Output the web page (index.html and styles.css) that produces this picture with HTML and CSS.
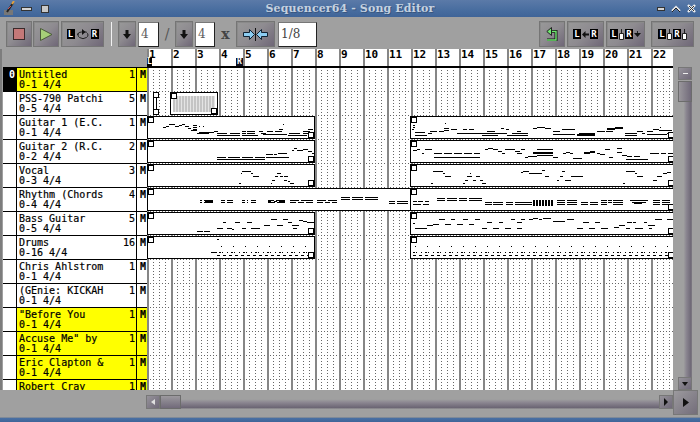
FILE: index.html
```html
<!DOCTYPE html>
<html lang="en">
<head>
<meta charset="utf-8">
<title>Sequencer64 - Song Editor</title>
<link rel="stylesheet" href="styles.css">
</head>
<body>
<div class="window">
  <header class="titlebar">
    <div class="tb-group">
      <svg class="tb-icon" width="12" height="15" viewBox="0 0 12 15"><path d="M0 9h9v5H0z" fill="#777"/><path d="M3 11L9 2" stroke="#222" stroke-width="2"/><path d="M8 3L10 0" stroke="#e0a040" stroke-width="2"/><path d="M4 8l3-3" stroke="#d05050"/></svg>
      <span class="tb-min"></span>
      <span class="tb-max"></span>
    </div>
    <div class="tb-title">Sequencer64 - Song Editor</div>
    <div class="tb-group tb-right">
      <span class="tb-min small"></span>
      <svg width="10" height="8" viewBox="0 0 10 8"><path d="M1 6l4-4 4 4" fill="none" stroke="#e8e8e8" stroke-width="2"/><path d="M1 7l4-4 4 4" fill="none" stroke="#222" stroke-width="1"/></svg>
      <svg width="9" height="9" viewBox="0 0 9 9"><path d="M1 1l7 7M8 1L1 8" stroke="#eee" stroke-width="2.4"/><path d="M2 2l5 5M7 2L2 7" stroke="#333" stroke-width="1"/></svg>
    </div>
  </header>

  <nav class="toolbar">
    <button class="btn w26"><span class="stop"></span></button>
    <button class="btn w26"><svg width="13" height="13" viewBox="0 0 13 13"><path d="M.5 .5L12 6.500.5 12.500z" fill="#a6cf78" stroke="#4a5a3a"/></svg></button>
    <button class="btn w43"><span class="mk">L</span><svg width="14" height="11" viewBox="0 0 14 11"><path d="M3.500 3.500a5 3.500 0 1 0 7 0" fill="none" stroke="#222"/><path d="M1.500 6a5 3 0 0 1 4-3h5" fill="none" stroke="#222"/><path d="M6 0v6l3.500-3z" fill="#111"/></svg><span class="mk">R</span></button>
    <span class="sep"></span>
    <button class="btn w18"><svg width="8" height="9" viewBox="0 0 8 9"><path d="M2.500 0h3v4H8L4 9 0 4h2.500z" fill="#111"/></svg></button>
    <span class="entry e21">4</span>
    <span class="glyph slash">/</span>
    <button class="btn w18"><svg width="8" height="9" viewBox="0 0 8 9"><path d="M2.500 0h3v4H8L4 9 0 4h2.500z" fill="#111"/></svg></button>
    <span class="entry e20">4</span>
    <span class="glyph times">x</span>
    <button class="btn w39"><svg width="25" height="13" viewBox="0 0 25 13"><path d="M.5 4.500h6v-3l5 5-5 5v-3h-6z" fill="#8ccdf2" stroke="#123"/><path d="M12.500 0v13" stroke="#111"/><path d="M24.500 4.500h-6v-3l-5 5 5 5v-3h6z" fill="#8ccdf2" stroke="#123"/></svg></button>
    <span class="entry e39">1/8</span>
    <span class="spacer"></span>
    <button class="btn w26"><svg width="12" height="14" viewBox="0 0 12 14"><path d="M1 13h9V4.500H4" fill="none" stroke="#111" stroke-width="3"/><path d="M1 13h9V4.500H4" fill="none" stroke="#6fe86f" stroke-width="1.400"/><path d="M5.500 .5L.8 4.500l4.700 4z" fill="#6fe86f" stroke="#222"/></svg></button>
    <button class="btn w37"><span class="mk">L</span><svg width="7" height="7" viewBox="0 0 7 7"><path d="M0 3.500L3.500 0v2.500H7v2H3.500V7z" fill="#111"/></svg><span class="mk">R</span></button>
    <button class="btn w39"><span class="mk">L</span><svg width="5" height="11" viewBox="0 0 5 11"><path d="M.5 4.500h4v6h-4z" fill="#fff" stroke="#222"/><path d="M2.500 0v4" stroke="#222"/></svg><span class="mk">R</span><svg width="7" height="11" viewBox="0 0 7 11"><path d="M3.500 2v3" stroke="#222"/><path d="M0 4h7L3.500 8z" fill="#111"/></svg></button>
    <button class="btn w43"><span class="mk">L</span><svg width="5" height="11" viewBox="0 0 5 11"><path d="M.5 4.500h4v6h-4z" fill="#fff" stroke="#222"/><path d="M2.500 0v4" stroke="#222"/></svg><span class="mk">R</span><svg width="5" height="11" viewBox="0 0 5 11"><path d="M.5 4.500h4v6h-4z" fill="#fff" stroke="#222"/><path d="M2.500 0v4" stroke="#222"/></svg></button>
  </nav>

  <main class="song">
    <section class="tracks">
      <div class="track active"><span class="num">0</span><div class="name"><div class="line"><span>Untitled</span><span>1</span></div><div>0-1 4/4</div></div><span class="mute">M</span></div>
      <div class="track"><span class="num"></span><div class="name"><div class="line"><span>PSS-790 Patchi</span><span>5</span></div><div>0-5 4/4</div></div><span class="mute">M</span></div>
      <div class="track"><span class="num"></span><div class="name"><div class="line"><span>Guitar 1 (E.C.</span><span>1</span></div><div>0-1 4/4</div></div><span class="mute">M</span></div>
      <div class="track"><span class="num"></span><div class="name"><div class="line"><span>Guitar 2 (R.C.</span><span>2</span></div><div>0-2 4/4</div></div><span class="mute">M</span></div>
      <div class="track"><span class="num"></span><div class="name"><div class="line"><span>Vocal</span><span>3</span></div><div>0-3 4/4</div></div><span class="mute">M</span></div>
      <div class="track"><span class="num"></span><div class="name"><div class="line"><span>Rhythm (Chords</span><span>4</span></div><div>0-4 4/4</div></div><span class="mute">M</span></div>
      <div class="track"><span class="num"></span><div class="name"><div class="line"><span>Bass Guitar</span><span>5</span></div><div>0-5 4/4</div></div><span class="mute">M</span></div>
      <div class="track"><span class="num"></span><div class="name"><div class="line"><span>Drums</span><span>16</span></div><div>0-16 4/4</div></div><span class="mute">M</span></div>
      <div class="track"><span class="num"></span><div class="name"><div class="line"><span>Chris Ahlstrom</span><span>1</span></div><div>0-1 4/4</div></div><span class="mute">M</span></div>
      <div class="track"><span class="num"></span><div class="name"><div class="line"><span>(GEnie: KICKAH</span><span>1</span></div><div>0-1 4/4</div></div><span class="mute">M</span></div>
      <div class="track active"><span class="num"></span><div class="name"><div class="line"><span>"Before You</span><span>1</span></div><div>0-1 4/4</div></div><span class="mute">M</span></div>
      <div class="track active"><span class="num"></span><div class="name"><div class="line"><span>Accuse Me" by</span><span>1</span></div><div>0-1 4/4</div></div><span class="mute">M</span></div>
      <div class="track active"><span class="num"></span><div class="name"><div class="line"><span>Eric Clapton &amp;</span><span>1</span></div><div>0-1 4/4</div></div><span class="mute">M</span></div>
      <div class="track active cut"><span class="num"></span><div class="name"><div class="line"><span>Robert Cray</span><span>1</span></div></div><span class="mute">M</span></div>
    </section>

    <section class="roll">
      <div class="ruler">
        <span>1</span><span>2</span><span>3</span><span>4</span><span>5</span><span>6</span><span>7</span><span>8</span><span>9</span><span>10</span><span>11</span>
        <span>12</span><span>13</span><span>14</span><span>15</span><span>16</span><span>17</span><span>18</span><span>19</span><span>20</span><span>21</span><span>22</span>
        <i class="marker m-l">L</i><i class="marker m-r">R</i>
      </div>
      <div class="lanes">
        <svg class="grid" width="526" height="323">
          <defs>
            <pattern id="cell" width="24" height="24" patternUnits="userSpaceOnUse">
              <path d="M0 .5h24" stroke="#666" stroke-dasharray="1 2"/>
              <path d="M6.500 0v24M12.500 0v24M18.500 0v24" stroke="#666" stroke-dasharray="1 2"/>
              <rect width="2" height="24" fill="#868686"/>
            </pattern>
          </defs>
          <rect width="526" height="323" fill="#fff"/>
          <rect width="526" height="323" fill="url(#cell)"/>
        </svg>
        <div class="lane"></div>
        <div class="lane"><div class="seg tiny"></div><div class="seg block"><div class="stripes"></div></div></div>
        <div class="lane"><div class="seg a"></div><div class="seg b"></div>
          <svg class="notes" width="526" height="24"><path d="M16 12h3M19 11h3M22 9h6M28 11h4M32 10h3M35 9h3M38 11h4M41 13h3M44 15h6M46 10h4M46 12h4M46 14h4M52 11h1M56 11h1M50 18h2M52 17h10M52 18h10M62 17h5M67 16h4M70 18h10M83 18h10M95 18h4M100 18h8M114 18h5M116 19h24M142 18h11M156 18h5M70 20h23M95 20h16M141 20h19M95 16h4M100 16h8M112 16h4M120 16h6M128 16h7M156 16h7M132 14h4M161 14h5M136 9h1M164 18h3M164 21h3"/><path d="M266 10h2M266 12h2M265 14h2M268 17h10M268 20h12M281 18h4M283 16h7M292 16h5M297 13h5M297 15h5M298 8h1M304 14h6M310 18h25M316 14h4M322 14h5M335 18h18M335 20h16M340 16h8M354 13h3M359 14h3M353 18h7M360 20h8M365 18h16M365 20h16M370 16h4M386 13h4M390 12h8M398 13h6M406 19h22M406 16h7M415 14h13M430 19h18M430 20h18M432 18h16M450 16h8M459 16h7M460 13h8M460 14h8M468 12h8M468 13h8M478 20h12M478 18h12M490 16h6M495 18h3M500 19h20M500 16h6M506 14h6M512 15h13M513 12h1M520 18h6"/></svg>
        </div>
        <div class="lane"><div class="seg a"></div><div class="seg b"></div>
          <svg class="notes" width="526" height="24"><path d="M70 18h9M81 18h12M95 18h11M108 18h10M70 20h48M119 15h7M127 15h3M131 14h9M119 18h23M145 11h2M147 9h3M150 11h3M153 11h3M156 10h5M161 12h4M165 14h3"/><path d="M266 11h4M270 10h3M275 14h2M278 10h7M287 14h8M297 14h8M307 14h8M317 14h8M327 14h6M287 18h46M338 10h3M341 9h5M346 10h5M351 12h4M355 14h3M358 10h10M368 12h5M370 14h5M374 10h4M378 18h3M381 17h9M386 13h20M386 14h20M390 10h16M390 16h16M406 18h5M416 14h3M419 13h4M423 14h3M426 19h9M437 13h6M437 14h6M443 12h5M443 13h5M450 14h3M453 15h5M458 10h5M462 18h4M470 9h5M470 13h5M475 16h5M479 20h22M480 17h5M487 17h6M503 14h3M506 14h6M514 14h5M521 14h5"/></svg>
        </div>
        <div class="lane"><div class="seg a"></div><div class="seg b"></div>
          <svg class="notes" width="526" height="24"><path d="M92 20h2M94 10h1M95 8h9M104 10h2M106 13h6M124 20h1M125 17h3M128 13h3M130 10h4M133 13h3M137 13h4M137 17h3M141 18h2M143 20h4"/><path d="M284 20h2M286 8h10M296 10h2M298 13h6M316 20h2M318 17h3M320 13h5M323 10h1M329 13h4M326 17h3M333 17h3M335 20h4M374 9h2M376 8h6M382 10h13M395 7h3M398 13h4M410 17h2M413 13h3M415 8h3M418 17h6M424 13h12M476 20h2M479 8h9M488 10h2M490 13h6M506 17h4M510 13h5M516 10h4M520 9h4"/></svg>
        </div>
        <div class="lane"><div class="seg a nohandle"></div><div class="seg b"></div>
          <svg class="notes" width="526" height="24"><path d="M53 13h2M53 15h2M57 13h1M57 15h1M58 13h8M58 14h8M58 15h8M74 13h4M80 13h6M74 15h4M80 15h6M95 13h3M100 13h1M104 13h5M95 15h3M100 15h1M104 15h5M121 13h6M129 13h9M121 14h3M127 14h3M132 14h6M121 15h7M130 15h8M143 13h9M154 13h12M143 15h6M151 15h6M159 15h7M170 13h9M181 13h9M170 15h6M178 15h5M185 15h5M194 10h9M205 10h11M218 10h13M194 12h9M205 12h11M218 12h13M242 14h6M250 14h10M242 16h6M250 16h10M253 14h8M253 16h8M266 14h4M271 14h5M278 14h4M266 17h8M276 17h6M290 11h8M300 11h10M312 11h8M322 11h13M290 13h8M300 13h10M312 13h8M322 13h13M338 15h7M346 15h10M359 15h7M368 15h17M338 17h7M346 17h10M359 17h7M368 17h17M410 13h8M420 13h10M410 15h8M420 15h10M410 17h8M420 17h10M434 15h7M443 15h8M434 17h7M443 17h8M454 13h6M461 13h4M466 13h10M454 15h6M461 15h4M466 15h10M454 17h6M466 17h10M483 13h18M485 15h14M487 16h8M506 13h7M515 13h8M506 15h7M515 15h8M506 17h7M515 17h8"/><path class="blocks" d="M386 14h20M386 17h20"/></svg>
        </div>
        <div class="lane"><div class="seg a"></div><div class="seg b"></div>
          <svg class="notes" width="526" height="24"><path d="M50 20h6M57 20h6M70 17h6M76 11h3M80 17h5M85 18h2M88 11h5M95 17h4M100 11h5M104 17h9M117 14h6M124 8h6M130 14h6M136 8h5M141 11h4M145 14h3M146 17h4M148 14h4M152 9h4M156 10h4M160 11h7"/><path d="M266 12h2M268 17h12M280 14h6M286 13h6M292 8h6M298 13h6M304 8h4M310 13h6M316 8h5M322 13h5M328 8h5M335 17h5M340 11h5M346 17h6M352 11h4M358 17h6M364 8h4M370 11h5M370 17h5M374 8h4M382 8h4M386 7h5M392 8h3M396 7h8M406 10h5M411 10h7M420 8h7M430 17h6M436 11h6M442 17h6M448 11h5M454 17h7M467 16h5M472 14h6M480 11h5M479 17h4M486 11h3M488 17h8M501 14h7M508 8h7M520 8h6M497 11h3M502 17h3"/></svg>
        </div>
        <div class="lane"><div class="seg a"></div><div class="seg b"></div>
          <svg class="notes" width="526" height="24"><path d="M70 4h2M64 17h6"/><path class="d12" d="M74 11H168"/><path class="d5" d="M72 17H167"/><path class="d4" d="M70 20H167"/><path class="d12" d="M268 11H526"/><path class="d5" d="M266 17H526"/><path class="d4" d="M266 20H526"/></svg>
        </div>
        <div class="lane"></div>
      </div>
    </section>

    <aside class="vscroll">
      <button class="sb-btn up"><span></span></button>
      <div class="sb-thumb-v"></div>
      <div class="sb-trough-v"></div>
      <button class="sb-btn dn"><span></span></button>
    </aside>
  </main>

  <footer class="bottom">
    <div class="hscroll">
      <button class="sb-btn lf"><span></span></button>
      <div class="sb-thumb-h"></div>
      <div class="sb-trough-h"></div>
      <button class="sb-btn rt"><span></span></button>
    </div>
    <button class="corner"><svg width="6" height="9" viewBox="0 0 6 9"><path d="M0 0l6 4.500L0 9z" fill="#111"/></svg></button>
  </footer>
  <div class="statusbar"></div>
</div>
</body>
</html>
```

FILE: styles.css
```css
* { box-sizing: border-box; }
html, body { margin: 0; padding: 0; }
body { width: 700px; height: 422px; overflow: hidden; background: #a0a0a0; }
button { padding: 0; margin: 0; font: inherit; }

.window { width: 700px; height: 422px; display: flex; flex-direction: column; background: #a0a0a0; overflow: hidden; }

/* title bar */
.titlebar {
  height: 17px; flex: none; display: flex; align-items: center; justify-content: space-between;
  background: linear-gradient(#5b7aa8, #486d9f 60%, #3f6498);
  padding: 0 4px;
}
.tb-group { display: flex; align-items: center; gap: 5px; width: 60px; }
.tb-right { justify-content: flex-end; gap: 6px; width: 60px; }
.tb-min { width: 11px; height: 4px; background: #d4d4d4; border: 1px solid #333; }
.tb-min.small { width: 8px; }
.tb-max { width: 8px; height: 8px; background: #c8c8c8; border: 1px solid #333; margin-left: 4px; }
.tb-title {
  font: bold 11px "DejaVu Serif", serif; letter-spacing: .12px; color: #c6d2e0; text-shadow: 1px 1px 0 #39577f;
  flex: 1; text-align: center;
}

/* tool bar */
.toolbar { height: 32px; flex: none; display: flex; align-items: flex-start; padding: 4px 6px 0 6px; gap: 1px; }
.btn {
  height: 26px; display: inline-flex; align-items: center; justify-content: center; gap: 1px;
  background: linear-gradient(135deg, #999 0%, #8e8b90 50%, #6f6777 100%);
  border: 1px solid #757575; box-shadow: inset 1px 1px 0 #8a8a8a;
  flex: none;
}
.w18 { width: 18px; }
.w26 { width: 26px; }
.w37 { width: 37px; margin-left: 1px; }
.w37 + .w39 { margin-left: 1px; }
.w39 { width: 39px; }
.w43 { width: 43px; }
.w26 + .w43 { margin-left: 1px; }
.w39 + .w43 { margin-left: 5px; }
.stop { width: 12px; height: 12px; background: #c47878; border: 1px solid #3a2a2a; display: block; }
.mk { width: 8px; height: 10px; background: #000; color: #fff; font: bold 9px/10px "DejaVu Sans Mono", monospace; text-align: center; display: block; flex: none; }
.sep { width: 1px; height: 24px; background: #f2f2f2; margin: 1px 5px 0 6px; }
.entry {
  height: 25px; background: #fff; border: 1px solid; border-color: #777 #222 #222 #777;
  font: 12px/23px "DejaVu Serif", serif; color: #5c5c5c; padding-left: 2px; margin-top: 1px; flex: none;
}
.e21 { width: 21px; margin-left: 1px; }
.e20 { width: 20px; margin-left: 1px; }
.e39 { width: 39px; margin-left: 2px; color: #444; }
.glyph { font: 14px/26px "DejaVu Serif", serif; color: #555; text-align: center; flex: none; }
.slash { width: 14px; }
.times { width: 19px; font-weight: bold; color: #444; }
.spacer { flex: 1; }

/* song area */
.song { height: 341px; flex: none; display: grid; grid-template-columns: 147px 526px 27px; overflow: hidden; }

.tracks { padding: 18px 0 0 3px; border-left: 2px solid #7d7d7d; height: 341px; overflow: hidden; }
.track { display: flex; height: 24px; border-top: 1px solid #000; background: #fff; font: 10px/11px "DejaVu Sans Mono", monospace; color: #000; margin-left: -2px; padding-top: 1px; -webkit-text-stroke: .2px #000; }
.num { width: 13px; flex: none; margin-top: -1px; padding-top: 1px; text-align: right; padding-right: 1px; font-weight: bold; }
.track:first-child .num { background: #000; color: #fff; -webkit-text-stroke: 0; height: 24px; }
.name { width: 121px; flex: none; margin-top: -1px; padding: 1px 1px 0 2px; border-left: 1px solid #000; border-right: 1px solid #000; white-space: nowrap; }
.name > div + div { margin-top: -1px; }
.line { display: flex; justify-content: space-between; }
.mute { flex: 1; margin-top: -1px; padding: 1px 0 0 3px; font-weight: bold; }
.active .name, .active .mute { background: #ff0; }

.roll { display: flex; flex-direction: column; overflow: hidden; height: 341px; }
.ruler {
  height: 18px; flex: none; background: #fff; display: flex; position: relative;
  border-bottom: 1px solid #000;
}
.ruler span {
  width: 24px; flex: none; border-left: 2px solid #868686;
  font: bold 11px/12px "DejaVu Sans Mono", monospace; color: #000;
}
.marker {
  position: absolute; bottom: 0; height: 8px; background: #000; color: #fff;
  font: bold 8px/8px "DejaVu Sans Mono", monospace; text-align: center;
}
.m-l { left: 0; width: 5px; }
.m-r { left: 89px; width: 7px; background: #112; }

.lanes { position: relative; flex: 1; overflow: hidden; }
.grid { position: absolute; left: 0; top: 0; display: block; }
.lane { height: 24px; position: relative; }
.lane:first-of-type { border-top: 1px solid #000; }
.seg { position: absolute; top: 1px; height: 23px; background: #fff; border: 1px solid #000; border-width: 1px 0 1px 1px; }
.seg::before, .seg::after { content: ""; position: absolute; width: 4px; height: 4px; background: #fff; border: 1px solid #000; z-index: 2; }
.seg::before { left: 0; top: 0; }
.seg::after { right: 0; bottom: 0; }
.seg.a { left: 0; width: 168px; border-right-width: 1px; }
.seg.b { left: 263px; width: 264px; }
.seg.nohandle { width: 263px; border-right-width: 0; }
.seg.nohandle::after { display: none; }
.seg.tiny { left: 6px; width: 4px; border-width: 1px; }
.seg.tiny::before, .seg.tiny::after { width: 4px; height: 4px; left: -1px; right: auto; }
.seg.tiny::before { top: -1px; }
.seg.tiny::after { bottom: -1px; }
.seg.block { left: 23px; width: 48px; border-width: 1px; padding: 3px 2px 2px 2px; }
.stripes { height: 100%; background: repeating-linear-gradient(90deg, #c4c4c4 0 2px, #e4e4e4 2px 3px); }
.notes { position: absolute; left: 0; top: 0; display: block; z-index: 1; }
.notes path { stroke: #000; stroke-width: 1; fill: none; shape-rendering: crispEdges; transform: translateY(.5px); }
.notes .d12 { stroke-dasharray: 1 11; }
.notes .d5 { stroke-dasharray: 2 1 1 4 1 3; }
.notes .d4 { stroke-dasharray: 3 3; }
.notes .blocks { stroke-dasharray: 2 1; stroke-width: 3; }

/* scroll bars */
.vscroll { padding: 18px 8px 0 5px; display: flex; flex-direction: column; background: #a0a0a0; }
.sb-btn {
  flex: none; display: flex; align-items: center; justify-content: center;
  background: linear-gradient(135deg, #96939a, #6f6878); border: 1px solid #777;
}
.up, .dn { width: 14px; height: 13px; }
.up span { width: 5px; height: 1px; background: #eee; }
.dn span, .lf span, .rt span { width: 0; height: 0; border-style: solid; }
.dn span { border-width: 4px 3px 0 3px; border-color: #111 transparent transparent; }
.lf span { border-width: 3px 4px 3px 0; border-color: transparent #e0e0e0 transparent transparent; }
.rt span { border-width: 4px 0 4px 4px; border-color: transparent transparent transparent #111; }
.sb-thumb-v { height: 21px; width: 14px; flex: none; margin-top: 1px; background: linear-gradient(90deg, #9a979c, #716a7a); border: 1px solid #6c6c6c; }
.sb-trough-v { flex: 1; width: 14px; background: linear-gradient(90deg, #a0a0a0 40%, #8a8590 60%, #6c6674 95%, #9a9a9a); }

.bottom { height: 27px; flex: none; display: flex; padding-left: 146px; }
.hscroll { width: 527px; height: 14px; margin-top: 5px; display: flex; }
.lf, .rt { width: 14px; height: 14px; }
.sb-thumb-h { width: 21px; flex: none; background: linear-gradient(#9c999e, #716a7a); border: 1px solid #6c6c6c; }
.sb-trough-h { flex: 1; background: linear-gradient(#a0a0a0 30%, #8a8590 55%, #6c6674 90%, #9a9a9a); }
.corner {
  width: 25px; height: 25px; display: flex; align-items: center; justify-content: center;
  background: linear-gradient(135deg, #9c9a9e, #736d7a); border: 1px solid #777;
}
.statusbar { flex: 1; background: linear-gradient(#4a70a4, #3f6498); border-top: 1px solid #7f8a99; }
```
